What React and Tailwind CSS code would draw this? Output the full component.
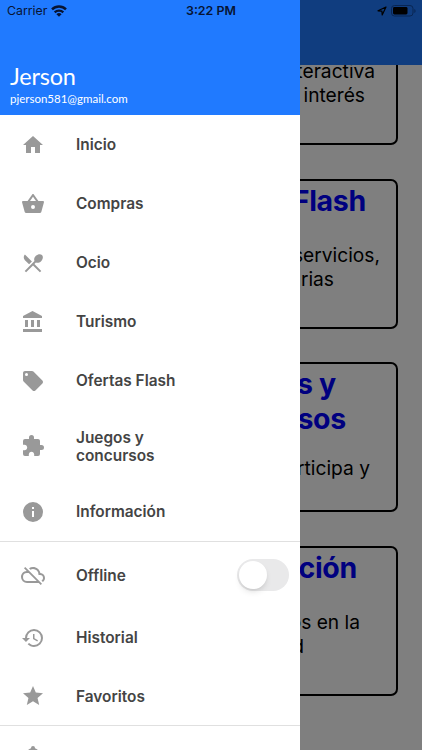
import React, { useState } from "react";

const icons = {
  home: "M10,20V14H14V20H19V12H22L12,3L2,12H5V20H10Z",
  basket:
    "M5.5,21C4.72,21 4.04,20.55 3.71,19.9V19.9L1.1,10.44L1,10A1,1 0 0,1 2,9H6.58L11.18,2.43C11.36,2.17 11.66,2 12,2C12.34,2 12.65,2.17 12.83,2.44L17.42,9H22A1,1 0 0,1 23,10L22.96,10.29L20.29,19.9C19.96,20.55 19.28,21 18.5,21H5.5M12,4.74L9,9H15L12,4.74M12,13A2,2 0 0,0 10,15A2,2 0 0,0 12,17A2,2 0 0,0 14,15A2,2 0 0,0 12,13Z",
  silverware:
    "M8.1,13.34L3.91,9.16C2.35,7.59 2.35,5.06 3.91,3.5L10.93,10.5L8.1,13.34M14.88,11.53L13.41,13L20.29,19.88L18.88,21.29L12,14.41L5.12,21.29L3.71,19.88L13.47,10.12C12.76,8.59 13.26,6.44 14.85,4.85C16.76,2.93 19.5,2.57 20.96,4.03C22.43,5.5 22.07,8.24 20.15,10.15C18.56,11.74 16.41,12.24 14.88,11.53Z",
  bank: "M11.5,1L2,6V8H21V6M16,10V17H19V10M2,22H21V19H2M10,10V17H13V10M4,10V17H7V10H4Z",
  tag: "M5.5,7A1.5,1.5 0 0,1 4,5.5A1.5,1.5 0 0,1 5.5,4A1.5,1.5 0 0,1 7,5.5A1.5,1.5 0 0,1 5.5,7M21.41,11.58L12.41,2.58C12.05,2.22 11.55,2 11,2H4C2.89,2 2,2.89 2,4V11C2,11.55 2.22,12.05 2.59,12.41L11.58,21.41C11.95,21.77 12.45,22 13,22C13.55,22 14.05,21.77 14.41,21.41L21.41,14.41C21.78,14.05 22,13.55 22,13C22,12.44 21.77,11.94 21.41,11.58Z",
  puzzle:
    "M20.5,11H19V7C19,5.89 18.1,5 17,5H13V3.5A2.5,2.5 0 0,0 10.5,1A2.5,2.5 0 0,0 8,3.5V5H4A2,2 0 0,0 2,7V10.8H3.5C5,10.8 6.2,12 6.2,13.5C6.2,15 5,16.2 3.5,16.2H2V20A2,2 0 0,0 4,22H7.8V20.5C7.8,19 9,17.8 10.5,17.8C12,17.8 13.2,19 13.2,20.5V22H17A2,2 0 0,0 19,20V16H20.5A2.5,2.5 0 0,0 23,13.5A2.5,2.5 0 0,0 20.5,11Z",
  info: "M13,9H11V7H13M13,17H11V11H13M12,2A10,10 0 0,0 2,12A10,10 0 0,0 12,22A10,10 0 0,0 22,12A10,10 0 0,0 12,2Z",
  cloudOff:
    "M7.73,10L15.73,18H6A4,4 0 0,1 2,14A4,4 0 0,1 6,10M3,5.27L5.75,8C2.56,8.15 0,10.77 0,14A6,6 0 0,0 6,20H17.73L19.73,22L21,20.73L4.27,4M19.35,10.03C18.67,6.59 15.64,4 12,4C10.5,4 9.15,4.43 8,5.17L9.45,6.63C10.21,6.23 11.08,6 12,6A5.5,5.5 0 0,1 17.5,11.5V12H19A3,3 0 0,1 22,15C22,16.13 21.36,17.11 20.44,17.62L21.89,19.07C23.16,18.16 24,16.68 24,15C24,12.36 21.95,10.22 19.35,10.03Z",
  history:
    "M13.5,8H12V13L16.28,15.54L17,14.33L13.5,12.25V8M13,3A9,9 0 0,0 4,12H1L4.96,16.03L9,12H6A7,7 0 0,1 13,5A7,7 0 0,1 20,12A7,7 0 0,1 13,19C11.07,19 9.32,18.21 8.06,16.94L6.64,18.36C8.27,20 10.5,21 13,21A9,9 0 0,0 22,12A9,9 0 0,0 13,3",
  star: "M12,17.27L18.18,21L16.54,13.97L22,9.24L14.81,8.62L12,2L9.19,8.62L2,9.24L7.45,13.97L5.82,21L12,17.27Z",
  bell: "M21,19V20H3V19L5,17V11C5,7.9 7.03,5.17 10,4.29C10,4.19 10,4.1 10,4A2,2 0 0,1 12,2A2,2 0 0,1 14,4C14,4.1 14,4.19 14,4.29C16.97,5.17 19,7.9 19,11V17L21,19M14,21A2,2 0 0,1 12,23A2,2 0 0,1 10,21",
};

const MenuIcon = ({ name }) => (
  <svg viewBox="0 0 24 24" className="w-6 h-6 shrink-0 fill-[#999999]">
    <path fillRule="evenodd" d={icons[name]} />
  </svg>
);

const MenuItem = ({ icon, label, height = "h-[59px]", children }) => (
  <div className={`flex items-center pl-[21px] ${height}`}>
    <MenuIcon name={icon} />
    <span className="ml-[31px] w-[110px] whitespace-pre-line pt-px text-[15.4px] leading-[18px] font-semibold text-[#444444]">
      {label}
    </span>
    {children}
  </div>
);

const Card = ({ children }) => (
  <div className="h-[150px] shrink-0 whitespace-nowrap rounded-[7px] border-2 border-black pt-[2px] text-right">
    {children}
  </div>
);

const Title = ({ className, children }) => (
  <h2 className={`text-[28.5px] leading-[35px] font-bold tracking-[-0.01em] text-[#0000ff] ${className}`}>{children}</h2>
);

const StatusBar = () => (
  <div className="absolute inset-x-0 top-0 z-20 flex h-[22px] items-center pl-[7px] pr-[6px] text-[#071433]">
    <span className="w-[44px] text-[12.3px]">Carrier</span>
    <svg viewBox="0 0 16 12" className="w-[16px] h-[12px]" fill="none" stroke="currentColor" strokeWidth="2.4">
      <path d="M1 4.4a10 10 0 0 1 14 0M3.7 7.4a6.2 6.2 0 0 1 8.6 0" />
      <path d="M8 11.8 5.4 9.2a3.7 3.7 0 0 1 5.2 0z" fill="currentColor" stroke="none" />
    </svg>
    <span className="ml-[119px] text-[12.4px] font-semibold">3:22 PM</span>
    <div className="ml-auto flex items-center gap-[4px] text-black">
      <svg viewBox="0 0 10 10" className="w-[10px] h-[10px]" fill="none" stroke="currentColor" strokeWidth="1.2" strokeLinejoin="round">
        <path d="M9 1 1 4.8 4.9 5.1 5.2 9z" />
      </svg>
      <svg viewBox="0 0 25 12" className="w-[25px] h-[12px]">
        <rect x="0.5" y="0.5" width="21.5" height="10.5" rx="3" fill="none" stroke="#092653" />
        <rect x="2" y="2" width="14.5" height="7.5" rx="1.4" fill="black" />
        <path d="M23.3 4v4q1.3-.6 1.3-2t-1.3-2" fill="#092653" />
      </svg>
    </div>
  </div>
);

const App = () => {
  const [offline, setOffline] = useState(false);

  return (
    <div className="relative h-[750px] w-[422px] overflow-hidden bg-white font-['Inter',sans-serif]">
      {/* HOME PAGE */}
      <div className="flex h-full flex-col">
        <header className="z-10 h-[65px] shrink-0 bg-[#207aff]" />
        <main className="-mt-[70px] flex w-[398px] flex-col gap-[33.5px] pl-[23px] text-[19.2px] leading-[24px] text-black">
          <Card>
            <p className="mt-[60px] pr-[21px]">Guía interactiva</p>
            <p className="pr-[31px]">puntos de interés</p>
          </Card>
          <Card>
            <Title className="pr-[30px]">Ofertas Flash</Title>
            <p className="mt-[25px] pr-[16px]">Productos, servicios,</p>
            <p className="pr-[62px]">ofertas diarias</p>
          </Card>
          <Card>
            <Title className="pr-[60px]">Juegos y</Title>
            <Title className="pr-[50px]">concursos</Title>
            <p className="mt-[20px] pr-[26px]">Participa y</p>
          </Card>
          <Card>
            <Title className="pr-[39px]">Información</Title>
            <p className="mt-[25px] pr-[36px]">eventos en la</p>
            <p className="pr-[92px]">ciudad</p>
          </Card>
        </main>
      </div>

      {/* OVERLAY */}
      <div className="absolute inset-0 z-10 bg-black/50" />

      {/* DRAWER */}
      <aside className="absolute left-0 top-0 z-10 h-full w-[299.5px] overflow-hidden bg-white">
        <div className="flex h-[115px] flex-col bg-[#207aff] pl-[10px] pt-[60px] font-['Lato',sans-serif] text-white">
          <span className="text-[23.5px] leading-[32px] tracking-[-0.01em]">Jerson</span>
          <span className="text-[11.5px] leading-[14px]">pjerson581@gmail.com</span>
        </div>
        <nav>
          <MenuItem icon="home" label="Inicio" />
          <MenuItem icon="basket" label="Compras" />
          <MenuItem icon="silverware" label="Ocio" />
          <MenuItem icon="bank" label="Turismo" />
          <MenuItem icon="tag" label="Ofertas Flash" />
          <MenuItem icon="puzzle" label={"Juegos y\nconcursos"} height="h-[72px]" />
          <MenuItem icon="info" label="Información" />
        </nav>
        <nav className="border-t border-[#e0e0e0]">
          <MenuItem icon="cloudOff" label="Offline" height="h-[66px]">
            <button
              onClick={() => setOffline(!offline)}
              aria-label="Offline"
              className={`ml-[51px] flex h-[32px] w-[52px] items-center rounded-full p-[2px] ${offline ? "justify-end bg-green-500" : "bg-[#e9e9ea]"}`}
            >
              <span className="h-[28px] w-[28px] rounded-full bg-white shadow-md" />
            </button>
          </MenuItem>
          <MenuItem icon="history" label="Historial" />
          <MenuItem icon="star" label="Favoritos" height="h-[58px]" />
        </nav>
        <nav className="border-t border-[#e0e0e0]">
          <MenuItem icon="bell" label="" />
        </nav>
      </aside>

      <StatusBar />
    </div>
  );
};

export default App;
